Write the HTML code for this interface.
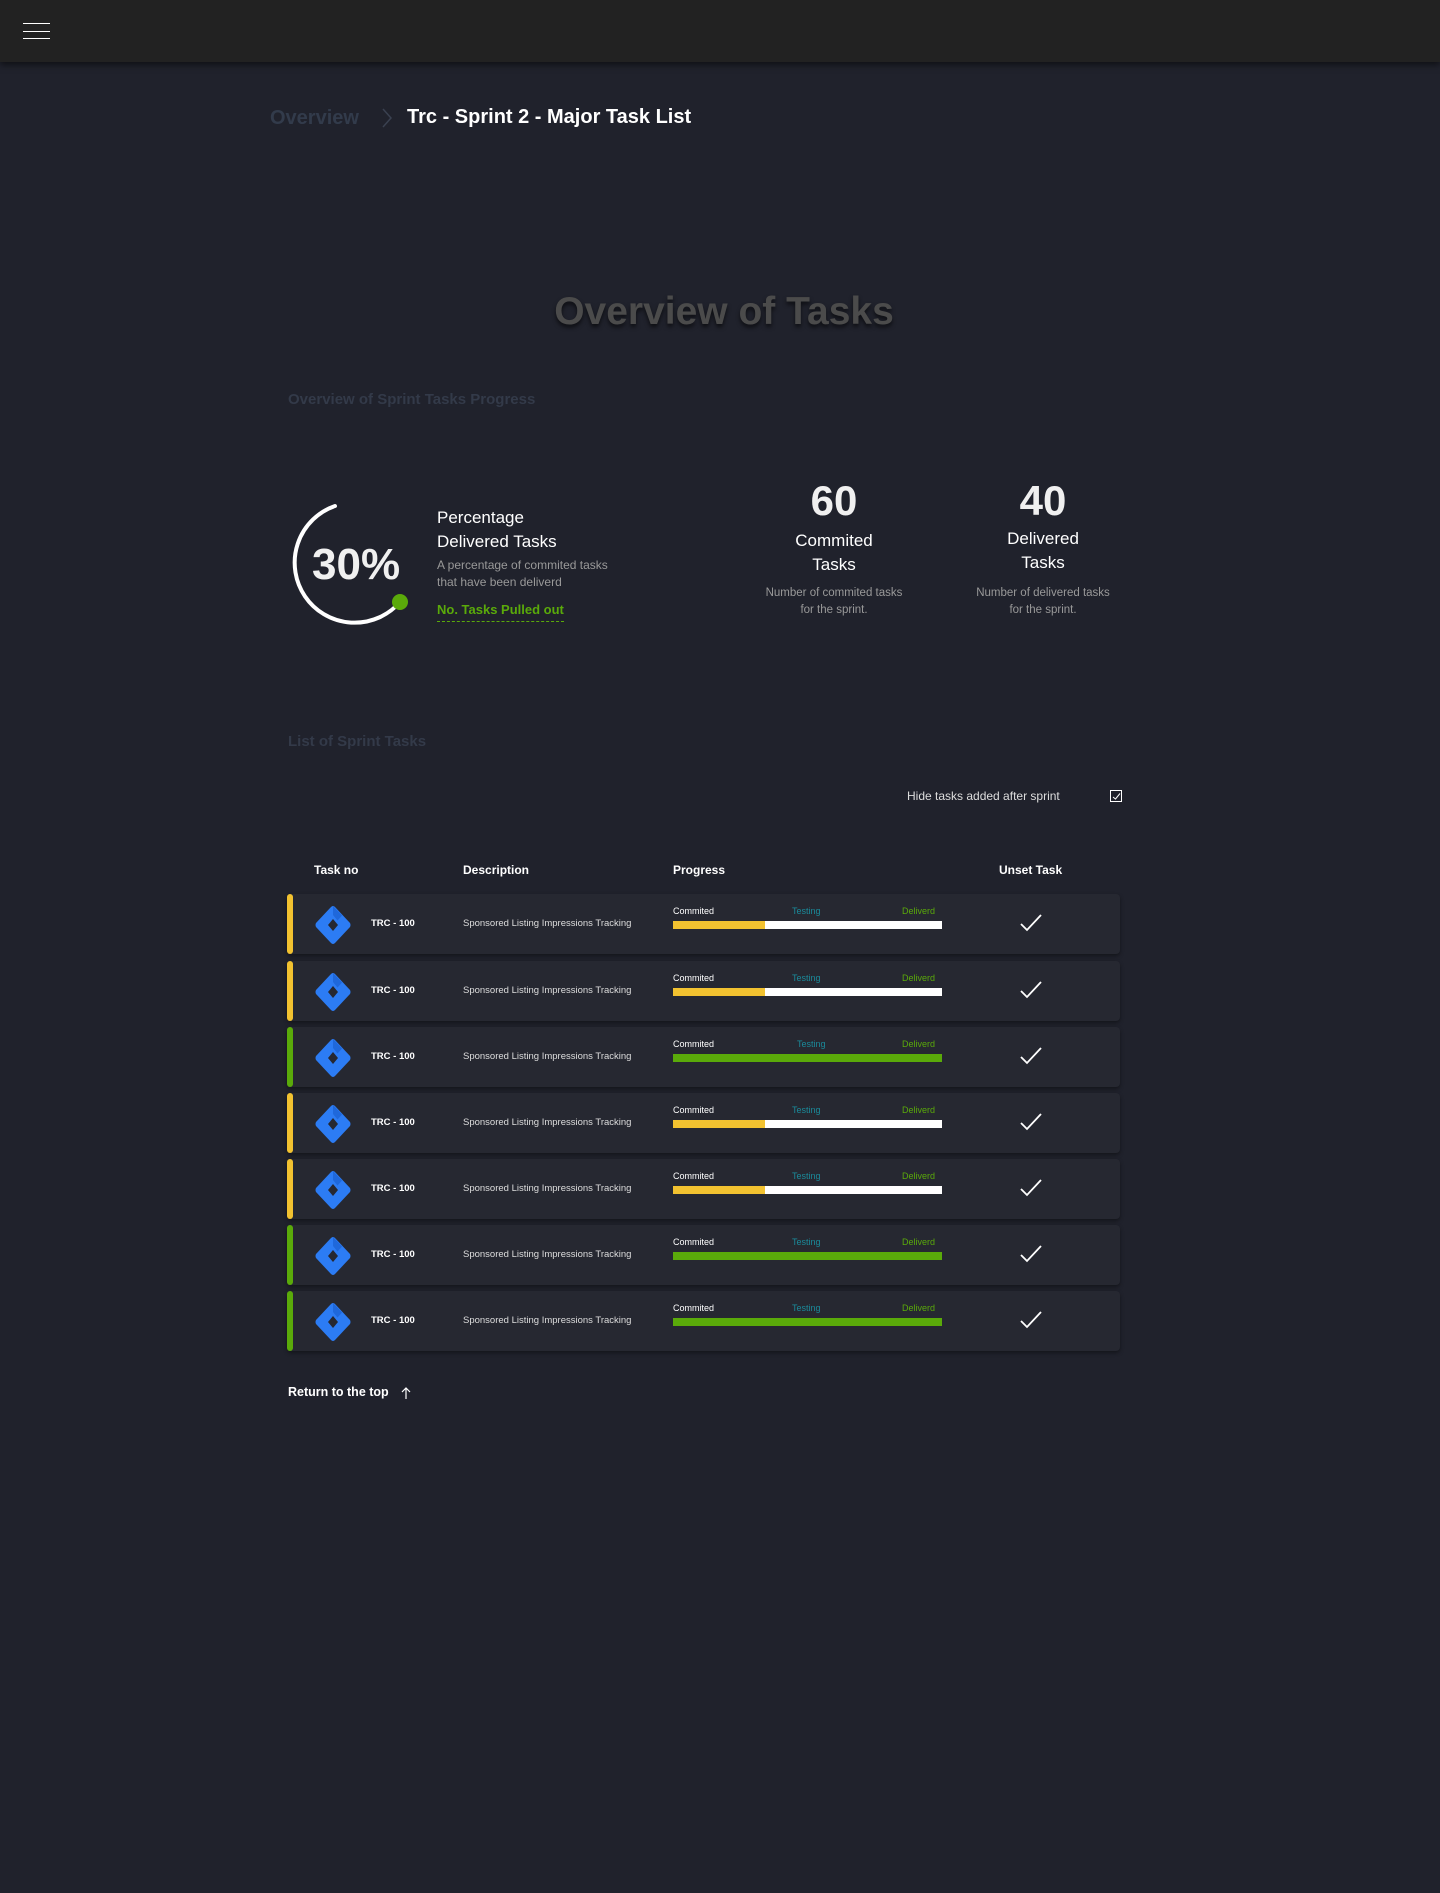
<!DOCTYPE html>
<html><head><meta charset="utf-8"><style>
*{margin:0;padding:0;box-sizing:border-box}
body{width:1440px;height:1893px;background:#20222c;font-family:"Liberation Sans",sans-serif;color:#fff;position:relative;overflow:hidden}
.abs{position:absolute}
.hdr{left:0;top:0;width:1440px;height:62px;background:#222222;box-shadow:0 3px 6px rgba(0,0,0,.5)}
.ham{left:23px;width:27px;height:1px;background:#fff}
.row{position:absolute;left:287px;width:833px;height:60px;background:#262831;border-radius:4px;box-shadow:0 2px 4px rgba(0,0,0,.4)}
.row .bar{position:absolute;left:0;top:0;width:6px;height:60px;border-radius:3px}
.row .ic{position:absolute;left:26px;top:11px}
.row .no{position:absolute;left:84px;top:24px;font-size:9.5px;font-weight:bold}
.row .ds{position:absolute;left:176px;top:24px;font-size:9.5px;color:#ddd}
.row .lb{position:absolute;top:12px;font-size:9px}
.row .pb{position:absolute;left:386px;top:27px;width:269px;height:8px;background:#fff}
.row .pf{position:absolute;left:0;top:0;height:8px}
.row .ck{position:absolute;left:732px;top:19px}
</style></head><body>
<div class="abs hdr"></div>
<div class="abs ham" style="top:23px"></div>
<div class="abs ham" style="top:31px"></div>
<div class="abs ham" style="top:38px"></div>
<div class="abs" style="left:270px;top:107px;font-size:20px;font-weight:bold;color:#323b4b">Overview</div>
<svg class="abs" style="left:381px;top:107px" width="12" height="22"><path d="M2 2 L10 11 L2 20" stroke="#3a4150" stroke-width="1.5" fill="none"/></svg>
<div class="abs" style="left:407px;top:106px;font-size:20px;font-weight:bold;color:#fff">Trc - Sprint 2 - Major Task List</div>
<div class="abs" style="left:0;width:1448px;top:290px;text-align:center;font-size:39px;font-weight:bold;color:#4b4b4b;text-shadow:0 3px 4px rgba(0,0,0,.6)">Overview of Tasks</div>
<div class="abs" style="left:288px;top:391px;font-size:15px;font-weight:bold;color:#333a49">Overview of Sprint Tasks Progress</div>
<svg class="abs" style="left:280px;top:498px" width="140" height="140">
<path d="M55 8 A60 60 0 1 0 120 104" stroke="#fff" stroke-width="4" fill="none" stroke-linecap="round"/>
<circle cx="120" cy="104" r="8" fill="#5aaa0a"/>
</svg>
<div class="abs" style="left:312px;top:540px;font-size:44px;font-weight:bold;color:#f0f0f0">30%</div>
<div class="abs" style="left:437px;top:506px;font-size:17px;line-height:24px">Percentage<br>Delivered Tasks</div>
<div class="abs" style="left:437px;top:557px;font-size:12px;line-height:17px;color:#999">A percentage of commited tasks<br>that have been deliverd</div>
<div class="abs" style="left:437px;top:602px;font-size:13px;font-weight:bold;color:#5aaa0a;padding-bottom:4px;border-bottom:1px dashed #5aaa0a">No. Tasks Pulled out</div>
<div class="abs" style="left:734px;width:200px;top:477px;text-align:center;font-size:42px;font-weight:bold;color:#f0f0f0">60</div>
<div class="abs" style="left:734px;width:200px;top:529px;text-align:center;font-size:17px;line-height:24px">Commited<br>Tasks</div>
<div class="abs" style="left:734px;width:200px;top:585px;text-align:center;font-size:11.5px;line-height:17px;color:#999">Number of commited tasks<br>for the sprint.</div>
<div class="abs" style="left:943px;width:200px;top:477px;text-align:center;font-size:42px;font-weight:bold;color:#f0f0f0">40</div>
<div class="abs" style="left:943px;width:200px;top:527px;text-align:center;font-size:17px;line-height:24px">Delivered<br>Tasks</div>
<div class="abs" style="left:943px;width:200px;top:585px;text-align:center;font-size:11.5px;line-height:17px;color:#999">Number of delivered tasks<br>for the sprint.</div>
<div class="abs" style="left:288px;top:733px;font-size:15px;font-weight:bold;color:#333a49">List of Sprint Tasks</div>
<div class="abs" style="left:907px;top:789px;font-size:12px;color:#ddd">Hide tasks added after sprint</div>
<div class="abs" style="left:1110px;top:790px;width:12px;height:12px;border:1.5px solid #fff"></div>
<svg class="abs" style="left:1112px;top:792px" width="9" height="9"><path d="M1 5 L3.5 7 L8 1.5" stroke="#fff" stroke-width="1" fill="none"/></svg>
<div class="abs" style="left:314px;top:863px;font-size:12px;font-weight:bold">Task no</div>
<div class="abs" style="left:463px;top:863px;font-size:12px;font-weight:bold">Description</div>
<div class="abs" style="left:673px;top:863px;font-size:12px;font-weight:bold">Progress</div>
<div class="abs" style="left:999px;top:863px;font-size:12px;font-weight:bold">Unset Task</div>
<div id="rows"></div>
<div class="abs" style="left:288px;top:1385px;font-size:12.5px;font-weight:bold">Return to the top</div>
<svg class="abs" style="left:400px;top:1386px" width="12" height="14"><path d="M6 13 V2 M2 6 L6 2 L10 6" stroke="#fff" stroke-width="1.2" fill="none"/></svg>
<script>
var tops=[894,961,1027,1093,1159,1225,1291],g=[0,0,1,0,0,1,1],h='';
for(var i=0;i<7;i++){var c=g[i]?'#5aaa0a':'#f2c230';
h+='<div class="row" style="top:'+tops[i]+'px"><div class="bar" style="background:'+c+'"></div>'+
'<svg class="ic" width="40" height="40" viewBox="0 0 40 40"><path d="M20 1 Q21 1 22 2 L37 18 Q38 20 37 22 L22 38 Q20 40 18 38 L3 22 Q2 20 3 18 L18 2 Q19 1 20 1 Z M20 14 L15 20 L20 26 L25 20 Z" fill="#2c7cf4" fill-rule="evenodd"/><path d="M20 1 L29 10.5 L24.5 15.5 L20 10 Z" fill="#1a5fd0" opacity=".7"/></svg>'+
'<div class="no">TRC - 100</div><div class="ds">Sponsored Listing Impressions Tracking</div>'+
'<div class="lb" style="left:386px">Commited</div><div class="lb" style="left:'+(g[i]&&i==2?510:505)+'px;color:#1a8a9a">Testing</div><div class="lb" style="left:615px;color:#5aaa0a">Deliverd</div>'+
'<div class="pb"><div class="pf" style="width:'+(g[i]?269:92)+'px;background:'+c+'"></div></div>'+
'<svg class="ck" width="24" height="20"><path d="M2 11 L8 17 L22 2" stroke="#fff" stroke-width="1.8" fill="none"/></svg></div>';}
document.getElementById('rows').innerHTML=h;
</script>
</body></html>
